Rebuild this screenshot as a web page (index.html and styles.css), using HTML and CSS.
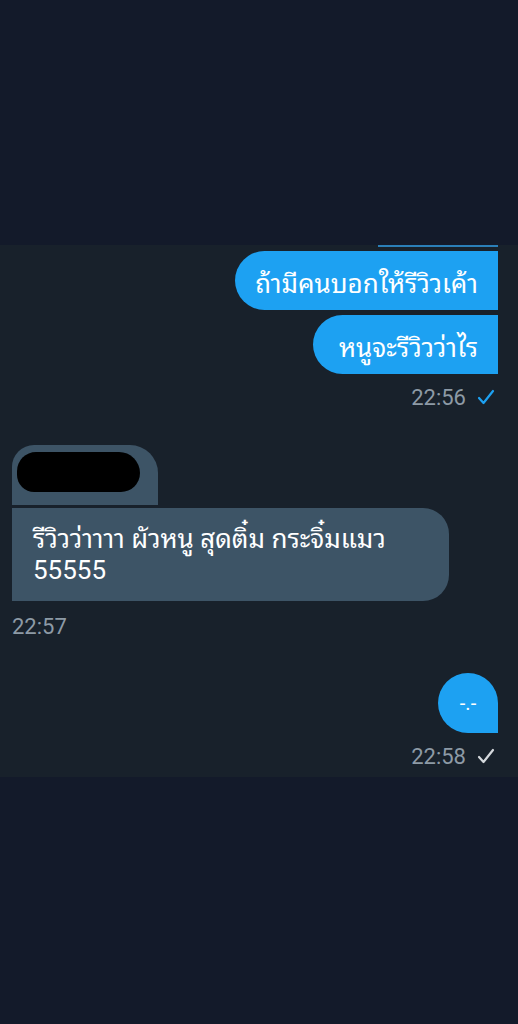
FILE: index.html
```html
<!DOCTYPE html>
<html lang="th">
<head>
<meta charset="utf-8">
<link rel="stylesheet" href="styles.css">
</head>
<body>
<div class="top"></div>
<div class="chat">
  <div class="cutline"></div>
  <div class="bubble out b1">ถ้ามีคนบอกให้รีวิวเค้า</div>
  <div class="bubble out b2">หนูจะรีวิวว่าไร</div>
  <div class="meta right">
    <span class="time">22:56</span>
    <svg class="check" width="18" height="16" viewBox="0 0 18 16"><path d="M2 9 L6.5 14 L16 2" fill="none" stroke="#1da1f2" stroke-width="2.2" stroke-linecap="round" stroke-linejoin="round"/></svg>
  </div>
  <div class="quote"><div class="blob"></div></div>
  <div class="bubble in">รีวิวว่าาาา ผัวหนู สุดติ๋ม กระจิ๋มแมว<br>55555</div>
  <div class="meta left"><span class="time">22:57</span></div>
  <div class="bubble out b3">-.-</div>
  <div class="meta right">
    <span class="time">22:58</span>
    <svg class="check" width="18" height="16" viewBox="0 0 18 16"><path d="M2 9 L6.5 14 L16 2" fill="none" stroke="#d4d8dc" stroke-width="2.2" stroke-linecap="round" stroke-linejoin="round"/></svg>
  </div>
</div>
</body>
</html>
```

FILE: styles.css
```css
html, body {
  margin: 0;
  padding: 0;
  background: #131a2a;
}
body {
  width: 518px;
  height: 1024px;
  font-family: Roboto, "Noto Sans", "Noto Sans Thai Looped", "Noto Sans Thai", sans-serif;
  color: #fff;
}
.top {
  height: 245px;
}
.chat {
  height: 532px;
  background: #18212b;
  padding: 0 20px 0 12px;
  box-sizing: border-box;
  display: flex;
  flex-direction: column;
}
.chat > * {
  flex-shrink: 0;
}
.cutline {
  align-self: flex-end;
  width: 120px;
  height: 2px;
  background: #2b7fb8;
}
.bubble {
  display: flex;
  align-items: center;
  box-sizing: border-box;
  font-size: 26px;
}
.out {
  align-self: flex-end;
  background: #1da1f2;
  color: #fff;
}
.b1 {
  margin-top: 4px;
  height: 59px;
  padding: 0 20px;
  border-radius: 30px 0 0 30px;
}
.b2 {
  margin-top: 5px;
  height: 59px;
  padding: 0 20px 0 26px;
  border-radius: 30px 0 0 30px;
}
.b3 {
  margin-top: 34px;
  width: 60px;
  height: 60px;
  justify-content: center;
  font-size: 20px;
  border-radius: 30px 30px 0 30px;
}
.meta {
  display: flex;
  align-items: center;
  gap: 11px;
  height: 26px;
  margin-top: 10px;
}
.meta.right {
  justify-content: flex-end;
  padding-right: 3px;
}
.time {
  font-size: 22px;
  color: #8d9aa6;
}
.check {
  display: block;
}
.quote {
  margin-top: 35px;
  width: 146px;
  height: 60px;
  background: #3d5466;
  border-radius: 22px 28px 0 0;
  box-sizing: border-box;
  padding: 7px 0 0 5px;
}
.blob {
  width: 123px;
  height: 40px;
  background: #000;
  border-radius: 20px 22px 20px 18px;
}
.in {
  display: block;
  margin-top: 3px;
  width: 437px;
  height: 93px;
  background: #3d5466;
  border-radius: 0 26px 26px 0;
  padding: 16px 0 0 21px;
  line-height: 31px;
}
.meta.left {
  margin-top: 12px;
}
```
